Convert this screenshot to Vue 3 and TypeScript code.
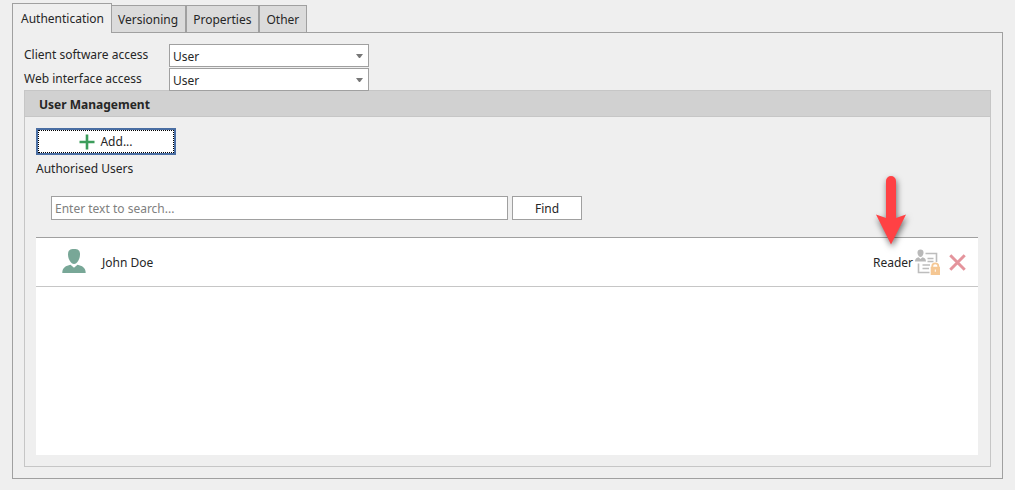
<script setup lang="ts">
import { ref } from 'vue'

interface AuthorisedUser {
  name: string
  role: string
}

const tabs: string[] = ['Authentication', 'Versioning', 'Properties', 'Other']
const activeTab = ref('Authentication')
const accessLevels: string[] = ['User', 'Administrator', 'None']
const clientAccess = ref('User')
const webAccess = ref('User')
const search = ref('')
const users = ref<AuthorisedUser[]>([{ name: 'John Doe', role: 'Reader' }])
</script>

<template>
  <main class="page">
    <div class="tabs" role="tablist">
      <button
        v-for="tab in tabs"
        :key="tab"
        type="button"
        role="tab"
        class="tab"
        :class="{ active: tab === activeTab }"
        :aria-selected="tab === activeTab"
        @click="activeTab = tab"
      >
        {{ tab }}
      </button>
    </div>

    <section class="panel">
      <div class="access">
        <label for="client-access">Client software access</label>
        <div class="combo">
          <select id="client-access" v-model="clientAccess">
            <option v-for="level in accessLevels" :key="level">{{ level }}</option>
          </select>
          <svg class="caret" viewBox="0 0 7 4" aria-hidden="true"><path d="M0 0H7L4 4H3Z" fill="#777" /></svg>
        </div>
        <label for="web-access">Web interface access</label>
        <div class="combo">
          <select id="web-access" v-model="webAccess">
            <option v-for="level in accessLevels" :key="level">{{ level }}</option>
          </select>
          <svg class="caret" viewBox="0 0 7 4" aria-hidden="true"><path d="M0 0H7L4 4H3Z" fill="#777" /></svg>
        </div>
      </div>

      <section class="group">
        <h2 class="group-title">User Management</h2>
        <div class="group-body">
          <button type="button" class="add">
            <svg class="plus" viewBox="0 0 16 16" aria-hidden="true">
              <path d="M8 0.500V15.500M0.500 8H15.500" fill="none" stroke="#3c9d5b" stroke-width="2.600" />
            </svg>
            Add...
          </button>
          <p class="caption">Authorised Users</p>

          <form class="search" @submit.prevent>
            <input v-model="search" type="text" aria-label="Search users" placeholder="Enter text to search..." />
            <button type="submit" class="find">Find</button>
          </form>

          <ul class="list">
            <li v-for="user in users" :key="user.name" class="row">
              <svg class="avatar" viewBox="0 0 24 24" aria-hidden="true">
                <path
                  d="M12 0C8 0 6 1.200 6 5.500C6 10 9 15 12 15C15 15 18 10 18 5.500C18 1.200 16 0 12 0Z"
                  fill="#78a797"
                />
                <path
                  d="M8.500 15.800L12 18.700L15.500 15.800C20 17 23.700 18.300 23.700 24H0.300C0.300 18.300 4 17 8.500 15.800Z"
                  fill="#78a797"
                />
              </svg>
              <span class="name">{{ user.name }}</span>
              <span class="role">{{ user.role }}</span>
              <button type="button" class="icon-button" aria-label="Change role">
                <svg class="role-icon" viewBox="0 0 26 26" aria-hidden="true">
                  <g fill="#b9b9b9">
                    <path d="M5.500 0.500C3.500 0.500 2.500 1.700 2.500 3.500C2.500 5.800 4 8 5.500 8C7 8 8.500 5.800 8.500 3.500C8.500 1.700 7.500 0.500 5.500 0.500Z" />
                    <path d="M3.600 8.300L5.500 9.900L7.400 8.300C9.500 8.900 11 9.700 11 12.500H0C0 9.700 1.500 8.900 3.600 8.300Z" />
                  </g>
                  <path
                    d="M10.500 4.500H21.500V13M3.500 14.500V23.500H14.500M12.500 9.500H18.500M12.500 12.500H18.500M7.500 16H15M7.500 19.500H14"
                    fill="none"
                    stroke="#bdbdbd"
                    stroke-width="1.600"
                  />
                  <path d="M17.300 18V17C17.300 15 18.500 14.300 20.300 14.300C22.100 14.300 23.300 15 23.300 17V18" fill="none" stroke="#f5c793" stroke-width="1.800" />
                  <path
                    d="M15.700 17.700H25V26H15.700ZM19.800 20.500V22.700H20.800V20.500Z"
                    fill="#f5c793"
                    fill-rule="evenodd"
                  />
                </svg>
              </button>
              <button type="button" class="icon-button remove" aria-label="Remove user">
                <svg class="cross" viewBox="0 0 16 16" aria-hidden="true">
                  <path d="M1.200 1.200L14.800 14.800M14.800 1.200L1.200 14.800" fill="none" stroke="#e4949c" stroke-width="2.800" />
                </svg>
              </button>
              <svg class="pointer" viewBox="0 0 44 80" aria-hidden="true">
                <path
                  d="M17 10A5 5 0 0 1 27 10V47L37 43.500L22 73.500L7 43.500L17 47Z"
                  fill="#ff4144"
                />
              </svg>
            </li>
          </ul>
        </div>
      </section>
    </section>
  </main>
</template>

<style>
body {
  margin: 0;
  background: #efefef;
}
</style>

<style scoped>
* {
  box-sizing: border-box;
}

.page {
  display: flex;
  flex-direction: column;
  min-height: 100vh;
  padding: 3px 12px 11px;
  background: #efefef;
  color: #262626;
  font-family: 'Noto Sans', 'Open Sans', sans-serif;
  font-size: 12px;
  line-height: 16px;
}

button,
input,
select {
  margin: 0;
  border: 1px solid #a0a0a0;
  border-radius: 0;
  background: #fff;
  color: inherit;
  font: inherit;
}

.tabs {
  display: flex;
  align-items: flex-end;
  position: relative;
  z-index: 1;
  margin-bottom: -1px;
}

.tab {
  height: 28px;
  padding: 2px 7px 0 6px;
  background: #dbdbdb;
}

.tab.active {
  height: 30px;
  padding: 1px 7px 0 8px;
  border-bottom: 0;
  background: #efefef;
}

.tab:nth-child(2) {
  border-left: 0;
}

.panel {
  display: flex;
  flex: 1;
  flex-direction: column;
  padding: 11px;
  border: 1px solid #a0a0a0;
}

.access {
  display: grid;
  grid-template-columns: 145px 200px;
  row-gap: 1px;
  position: relative;
  z-index: 1;
}

.access label {
  padding-top: 3px;
}

.combo {
  display: grid;
  align-items: center;
}

.combo > * {
  grid-area: 1 / 1;
}

.combo select {
  appearance: none;
  width: 100%;
  height: 23px;
  padding: 2px 20px 0 3px;
}

.caret {
  justify-self: end;
  width: 7px;
  height: 4px;
  margin-right: 6px;
  pointer-events: none;
}

.group {
  display: flex;
  flex: 1;
  flex-direction: column;
  margin-top: -1px;
  border: 1px solid #c6c6c6;
}

.group-title {
  margin: 0;
  padding: 6px 14px 3px;
  border-bottom: 1px solid #c6c6c6;
  background: #d1d1d1;
  font-size: 12px;
  font-weight: 700;
  line-height: 16px;
}

.group-body {
  display: flex;
  flex: 1;
  flex-direction: column;
  align-items: flex-start;
  padding: 11px 12px 11px 11px;
}

.add {
  display: flex;
  align-items: center;
  justify-content: center;
  gap: 5px;
  width: 140px;
  height: 27px;
  padding: 0;
  border: 2px solid #4a6ea3;
  outline: 1px dotted #000;
  outline-offset: -3px;
}

.plus {
  width: 16px;
  height: 16px;
}

.caption {
  margin: 6px 0 19px;
}

.search {
  display: flex;
  gap: 4px;
  max-width: 100%;
  margin-bottom: 17px;
  padding-left: 15px;
}

.search input {
  width: 457px;
  height: 24px;
  padding: 0 3px;
}

.search input::placeholder {
  color: #808080;
  opacity: 1;
}

.find {
  width: 70px;
  height: 24px;
  padding: 2px 0 0;
}

.list {
  flex: 1;
  align-self: stretch;
  margin: 0;
  padding: 0;
  border-top: 1px solid #a0a0a0;
  background: #fff;
  list-style: none;
}

.row {
  display: flex;
  align-items: center;
  position: relative;
  height: 49px;
  padding: 0 12px 0 26px;
  border-bottom: 1px solid #c6c6c6;
}

.avatar {
  width: 24px;
  height: 24px;
  margin-bottom: 2px;
}

.name {
  flex: 1;
  margin-left: 16px;
}

.name,
.role {
  padding-top: 2px;
}

.icon-button {
  display: flex;
  margin-left: 2px;
  padding: 0;
  border: 0;
  background: none;
}

.role-icon {
  width: 26px;
  height: 26px;
}

.remove {
  margin-left: 8px;
}

.cross {
  width: 17px;
  height: 17px;
}

.pointer {
  position: absolute;
  top: -67px;
  right: 65px;
  width: 44px;
  height: 80px;
  filter: drop-shadow(1px 3px 3px rgb(0 0 0 / 55%));
  pointer-events: none;
}
</style>
